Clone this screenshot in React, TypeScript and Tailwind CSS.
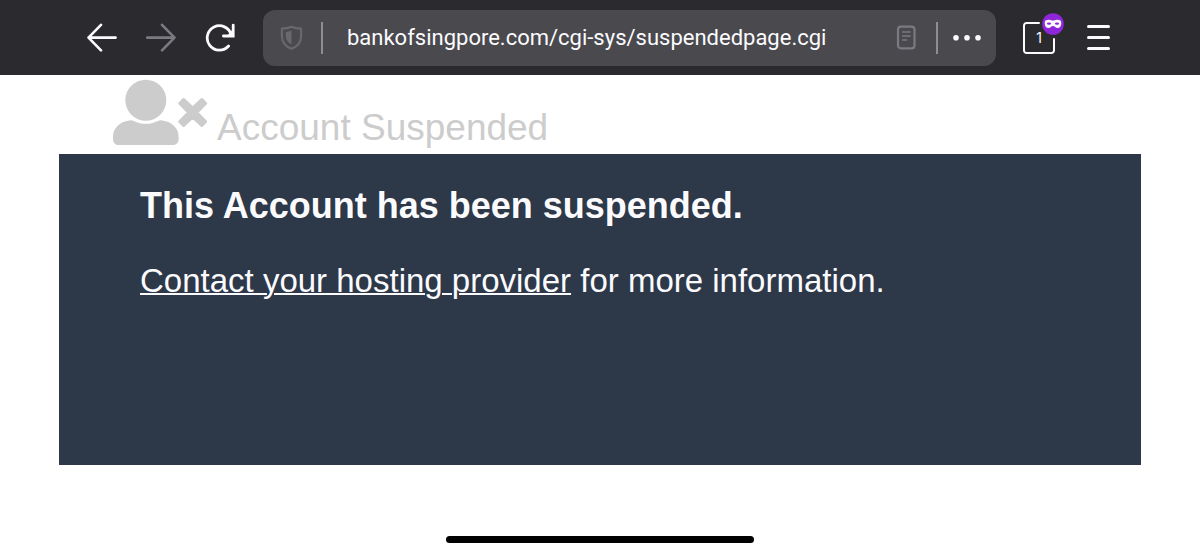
import { useState } from "react";

const C = { icon: "#FBFBFE", dim: "#7B7A80", faint: "#69686D", grey: "#CCCCCC" };

function BackIcon() {
  return (
    <svg width="30" height="30" viewBox="0 0 30 30" fill="none" stroke={C.icon} strokeWidth="2.6" strokeLinecap="round" strokeLinejoin="round">
      <path d="M28.6 14.6H1.5M14 1.8L1.5 14.6L14 27.4" />
    </svg>
  );
}

function ForwardIcon() {
  return (
    <svg width="30" height="30" viewBox="0 0 30 30" fill="none" stroke={C.dim} strokeWidth="2.6" strokeLinecap="round" strokeLinejoin="round">
      <path d="M1.2 14.6H28.5M16 1.8L28.5 14.6L16 27.4" />
    </svg>
  );
}

function ReloadIcon() {
  return (
    <svg width="30" height="30" viewBox="0 0 30 30" fill="none" stroke={C.icon} strokeWidth="2.8" strokeLinecap="round">
      <path d="M23.6 23A12.2 12.2 0 1 1 26.2 11.8" />
      <path d="M28.2 2.1V13H18.4" strokeLinejoin="miter" />
      <path d="M28 6V13H22Z" fill={C.icon} stroke="none" />
    </svg>
  );
}

function ShieldIcon() {
  return (
    <svg width="24" height="26" viewBox="0 0 24 26" fill="none">
      <path d="M12.5 1.8C15.5 3 18.5 3.6 22.1 3.7V11.1C22.1 17.4 18.1 22.2 12.5 23.6C6.9 22.2 2.9 17.4 2.9 11.1V3.7C6.5 3.6 9.5 3 12.5 1.8Z" stroke={C.faint} strokeWidth="2.2" strokeLinejoin="round" />
      <path d="M12.5 5.6V19.4C8.9 17.8 6.8 14.6 6.8 11V7C8.9 6.8 10.5 6.4 12.5 5.6Z" fill={C.faint} />
    </svg>
  );
}

function ReaderIcon() {
  return (
    <svg width="20" height="26" viewBox="0 0 20 26" fill="none" stroke={C.dim} strokeLinecap="round">
      <rect x="2" y="1.6" width="16.5" height="21.8" rx="2.8" strokeWidth="2.2" />
      <path d="M6.6 7H14.2M6.6 11H14.2M6.6 15H10.6" strokeWidth="1.3" />
    </svg>
  );
}

function DotsIcon() {
  return (
    <svg width="28" height="8" viewBox="0 0 28 8" fill={C.icon}>
      <circle cx="3" cy="3.8" r="2.8" />
      <circle cx="14" cy="3.8" r="2.8" />
      <circle cx="25" cy="3.8" r="2.8" />
    </svg>
  );
}

function MaskIcon() {
  return (
    <svg width="22" height="22" viewBox="0 0 22 22">
      <circle cx="11" cy="11" r="10.8" fill="#9026D9" />
      <path
        d="M6.6 6.8C8.6 6.6 9.8 7.8 11 7.8C12.2 7.8 13.4 6.6 15.4 6.8C18 6.9 19.4 7.9 19.3 9.9C19.2 13.1 17.8 15 15.6 15C13.4 15 12.8 12.9 11 12.9C9.2 12.9 8.6 15 6.4 15C4.2 15 2.8 13.1 2.7 9.9C2.6 7.9 4 6.9 6.6 6.8Z"
        fill={C.icon}
      />
      <ellipse cx="7" cy="10.6" rx="2.1" ry="1.2" fill="#9026D9" />
      <ellipse cx="15" cy="10.6" rx="2.1" ry="1.2" fill="#9026D9" />
    </svg>
  );
}

function UserTimesIcon() {
  return (
    <svg width="96" height="67" viewBox="0 0 96 67" fill={C.grey}>
      <circle cx="33.8" cy="21.2" r="20.5" />
      <path d="M17.4 41.4C19.2 40.9 20.4 41.4 22.2 42.2C29.4 45.6 38.2 45.6 45.4 42.2C47.2 41.4 48.4 40.9 50.2 41.4C60.2 42.4 66.6 49.4 66.6 57.4V60.2C66.6 63.9 64 66 60.6 66H7C3.6 66 1 63.9 1 60.2V57.4C1 49.4 7.4 42.4 17.4 41.4Z" />
      <path
        d="M71.6 20.2L80.7 28.6L89.8 20.2L94 24.4L85.2 33.5L94 42.6L89.8 46.8L80.7 38.4L71.6 46.8L67.4 42.6L76.2 33.5L67.4 24.4Z"
        stroke={C.grey}
        strokeWidth="2.4"
        strokeLinejoin="round"
      />
    </svg>
  );
}

function BrowserBar() {
  const [url, setUrl] = useState("bankofsingpore.com/cgi-sys/suspendedpage.cgi");

  return (
    <header className="flex h-[75px] items-center bg-[#2B2A2F] pl-[87px] pr-[90px]">
      <nav className="flex shrink-0 gap-[29px]">
        <button aria-label="Back"><BackIcon /></button>
        <button aria-label="Forward" disabled><ForwardIcon /></button>
        <button aria-label="Reload"><ReloadIcon /></button>
      </nav>
      <div className="ml-7 flex h-14 min-w-0 flex-1 items-center rounded-xl bg-[#4A494E] pl-4 pr-[15px]">
        <button aria-label="Tracking protection" className="shrink-0"><ShieldIcon /></button>
        <span className="ml-[18px] h-8 w-0.5 shrink-0 bg-[#8E8D92]" />
        <input
          type="text"
          aria-label="Address"
          value={url}
          onChange={(e) => setUrl(e.target.value)}
          className="ml-6 min-w-0 flex-1 bg-transparent font-['Roboto',sans-serif] text-[22px] leading-8 text-[#FBFBFE] outline-none"
        />
        <button aria-label="Reader view" className="shrink-0"><ReaderIcon /></button>
        <span className="ml-5 h-8 w-0.5 shrink-0 bg-[#8E8D92]" />
        <button aria-label="Page actions" className="ml-[15px] shrink-0"><DotsIcon /></button>
      </div>
      <button aria-label="Open tabs, private browsing" className="relative ml-[27px] flex h-8 w-8 shrink-0 items-center justify-center">
        <svg width="32" height="32" viewBox="0 0 32 32" fill="none" stroke={C.icon} strokeWidth="2" strokeLinecap="round" className="absolute inset-0">
          <path d="M16 1H3.5A2.5 2.5 0 0 0 1 3.5V28.5A2.5 2.5 0 0 0 3.5 31H28.5A2.5 2.5 0 0 0 31 28.5V17" />
        </svg>
        <span className="font-['Inter',sans-serif] text-sm text-[#FBFBFE]">1</span>
        <span className="absolute -right-[9px] -top-[9px]"><MaskIcon /></span>
      </button>
      <button aria-label="Menu" className="ml-8 flex w-[23px] shrink-0 flex-col gap-2">
        <span className="h-[3px] rounded-full bg-[#FBFBFE]" />
        <span className="h-[3px] rounded-full bg-[#FBFBFE]" />
        <span className="h-[3px] rounded-full bg-[#FBFBFE]" />
      </button>
    </header>
  );
}

export default function App() {
  return (
    <div className="flex min-h-screen flex-col bg-white font-['Liberation_Sans',Arial,sans-serif]">
      <BrowserBar />
      <main className="flex flex-1 flex-col px-[59px]">
        <div className="flex items-end gap-[9px] pb-2 pl-[53px] pt-1">
          <UserTimesIcon />
          <h1 className="text-[37px] leading-9 text-[#CCCCCC]">Account Suspended</h1>
        </div>
        <section className="min-h-[311px] bg-[#2D3849] px-[81px] pt-8 text-[#FBFBFE]">
          <h2 className="text-[36px] font-bold leading-10">This Account has been suspended.</h2>
          <p className="mt-[35px] text-[33px] leading-10">
            <a href="#contact" className="underline decoration-2 underline-offset-1">Contact your hosting provider</a> for more information.
          </p>
        </section>
      </main>
      <footer className="flex justify-center pb-[11px]">
        <div className="h-[7px] w-[308px] rounded-full bg-black" />
      </footer>
    </div>
  );
}
